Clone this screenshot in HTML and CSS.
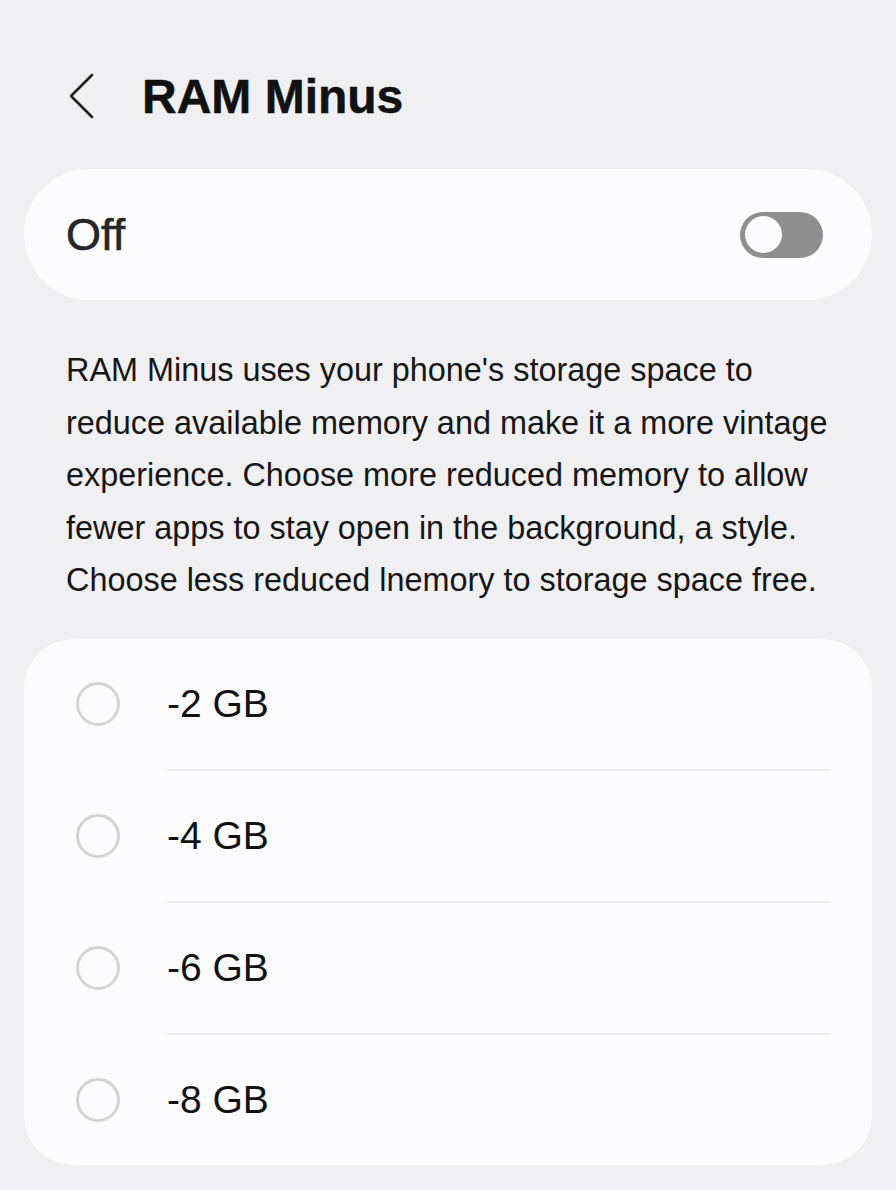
FILE: index.html
```html
<!DOCTYPE html>
<html lang="en">
<head>
  <meta charset="UTF-8">
  <meta name="viewport" content="width=device-width, initial-scale=1.0">
  <title>RAM Minus</title>
  <link rel="stylesheet" href="styles.css">
</head>
<body>
  <div class="screen">
    <!-- top bar -->
    <header class="top-bar">
      <span class="back-btn">
        <svg width="28" height="46" viewBox="0 0 28 46">
          <polyline points="24,2 3,23 24,44" fill="none" stroke="#1f1f1f" stroke-width="2.6" stroke-linecap="round" stroke-linejoin="round"/>
        </svg>
      </span>
      <h1 class="title">RAM Minus</h1>
    </header>

    <!-- master switch -->
    <div class="switch-card">
      <span class="switch-label">Off</span>
      <span class="toggle"><span class="knob"></span></span>
    </div>

    <p class="description">
      RAM Minus uses your phone's storage space to<br>
      reduce available memory and make it a more vintage<br>
      experience. Choose more reduced memory to allow<br>
      fewer apps to stay open in the background, a style.<br>
      Choose less reduced lnemory to storage space free.
    </p>

    <!-- options -->
    <div class="option-card">
      <div class="option-row"><span class="radio"></span><span class="option-text">-2 GB</span></div>
      <div class="divider"></div>
      <div class="option-row"><span class="radio"></span><span class="option-text">-4 GB</span></div>
      <div class="divider"></div>
      <div class="option-row"><span class="radio"></span><span class="option-text">-6 GB</span></div>
      <div class="divider"></div>
      <div class="option-row"><span class="radio"></span><span class="option-text">-8 GB</span></div>
    </div>
  </div>
</body>
</html>
```

FILE: styles.css
```css
body {
  margin: 0;
  padding: 0;
  background-color: #f0f0f2;
  font-family: "Liberation Sans", Arial, sans-serif;
  color: #111;
}

.screen {
  display: flex;
  flex-direction: column;
  padding: 0 24px;
}

/* 顶部标题栏 */
.top-bar {
  display: flex;
  align-items: center;
  height: 146px;
  padding: 23px 0 0 44px;
}

.back-btn {
  display: flex;
  width: 28px;
  height: 46px;
}

.title {
  margin: 0 0 0 46px;
  font-size: 48px;
  font-weight: bold;
  color: #111;
  -webkit-text-stroke: 0.5px #111;
}

/* 开关卡片 */
.switch-card {
  display: flex;
  align-items: center;
  justify-content: space-between;
  height: 131px;
  padding: 0 49px 0 42px;
  background-color: #fcfcfe;
  border-radius: 66px;
}

.switch-label {
  font-size: 45px;
  color: #262626;
  -webkit-text-stroke: 0.6px #262626;
}

.toggle {
  display: flex;
  align-items: center;
  width: 83px;
  height: 46px;
  padding: 0 5px;
  box-sizing: border-box;
  background-color: #8f8f8f;
  border-radius: 23px;
}

.knob {
  width: 37px;
  height: 37px;
  border-radius: 50%;
  background-color: #fcfcfe;
}

.description {
  margin: 44px 0 32px;
  padding: 0 10px 0 42px;
  font-size: 32.4px;
  line-height: 52.5px;
  color: #161616;
}

/* 选项卡片 */
.option-card {
  display: flex;
  flex-direction: column;
  background-color: #fcfcfe;
  border-radius: 50px;
}

.option-row {
  display: flex;
  align-items: center;
  height: 130px;
  padding-left: 52px;
}

.radio {
  width: 38px;
  height: 38px;
  border: 3px solid #d4d4d6;
  border-radius: 50%;
}

.option-text {
  margin-left: 47px;
  font-size: 39px;
  color: #111;
}

.divider {
  height: 2px;
  margin: 0 42px 0 143px;
  background-color: #ececee;
}
```
